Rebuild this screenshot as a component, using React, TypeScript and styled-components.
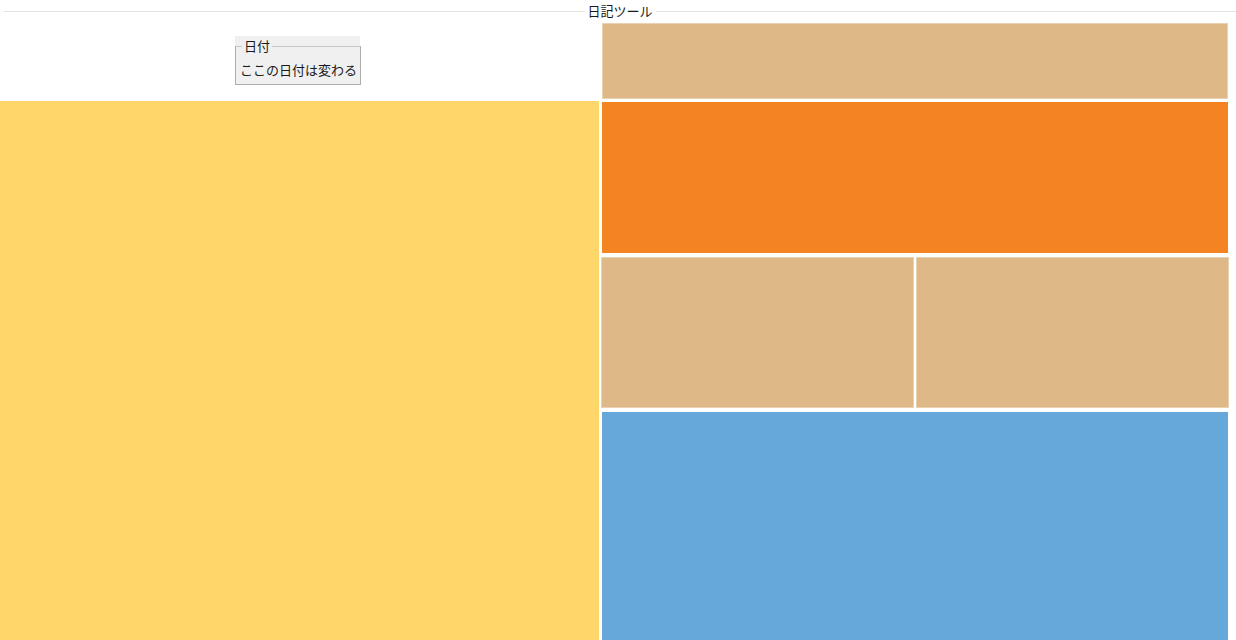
import styled, { createGlobalStyle } from "styled-components";

const GlobalStyle = createGlobalStyle`
  html, body {
    margin: 0;
    padding: 0;
    background: #ffffff;
    overflow: hidden;
  }
  body {
    font-family: "Noto Sans CJK JP", "Noto Sans", sans-serif;
    color: #1a1a1a;
  }
`;

const Page = styled.div`
  width: 1236px;
  height: 640px;
  display: flex;
  flex-direction: column;
  overflow: hidden;
`;

const TitleBar = styled.div`
  height: 23px;
  display: flex;
  align-items: center;
  gap: 3px;
  font-size: 13px;
  line-height: 16px;
  padding-bottom: 1px;
  padding-left: 4px;
  box-sizing: border-box;

  &::before,
  &::after {
    content: "";
    flex: 1;
    height: 1px;
    background: #e3e3e3;
    margin-top: 1px;
  }
`;

const Body = styled.div`
  flex: 1;
  display: grid;
  grid-template-columns: 599px 628px;
  column-gap: 2px;
`;

const LeftColumn = styled.div`
  display: flex;
  flex-direction: column;
`;

const DateArea = styled.div`
  height: 78px;
  display: flex;
  justify-content: center;
  padding-top: 13px;
  padding-right: 4px;
  box-sizing: border-box;
`;

const DateBox = styled.div`
  width: 125px;
  height: 49px;
  background: #f0f0f0;
  padding-top: 2px;
  box-sizing: border-box;
`;

const DateFieldset = styled.fieldset`
  margin: 0;
  padding: 0 3px 3px 4px;
  border: 1px solid #adadad;
  border-top-color: #c8c8c8;
  font-size: 13px;
  line-height: 18px;
  height: 47px;
  box-sizing: border-box;
`;

const DateLegend = styled.legend`
  padding: 0 2px;
  margin-left: 2px;
  line-height: 16px;
`;

const DateText = styled.div`
  margin-top: 7px;
  white-space: nowrap;
`;

const Panel = styled.div<{ $color: string; $soft?: boolean }>`
  background: ${(p) => p.$color};
  box-shadow: ${(p) =>
    p.$soft ? "inset 0 0 0 1px rgba(255, 255, 255, 0.35)" : "none"};
`;

const YellowPanel = styled(Panel)`
  flex: 1;
`;

const RightColumn = styled.div`
  display: grid;
  grid-template-rows: 75px 151px 151px 1fr;
  row-gap: 4px;
  padding-left: 1px;
  padding-right: 1px;
`;

const WidePanel = styled(Panel)`
  margin-right: 1px;
`;

const HeadPanel = styled(WidePanel)`
  margin-bottom: -1px;
`;

const SplitRow = styled.div`
  display: grid;
  grid-template-columns: 313px 313px;
  column-gap: 2px;
  margin-left: -1px;
`;

export default function App() {
  return (
    <>
      <GlobalStyle />
      <Page>
        <TitleBar>日記ツール</TitleBar>
        <Body>
          <LeftColumn>
            <DateArea>
              <DateBox>
                <DateFieldset>
                  <DateLegend>日付</DateLegend>
                  <DateText>ここの日付は変わる</DateText>
                </DateFieldset>
              </DateBox>
            </DateArea>
            <YellowPanel $color="#fed66a" />
          </LeftColumn>
          <RightColumn>
            <HeadPanel $color="#deb887" $soft />
            <WidePanel $color="#f48322" />
            <SplitRow>
              <Panel $color="#deb887" $soft />
              <Panel $color="#deb887" $soft />
            </SplitRow>
            <WidePanel $color="#67a8db" />
          </RightColumn>
        </Body>
      </Page>
    </>
  );
}
